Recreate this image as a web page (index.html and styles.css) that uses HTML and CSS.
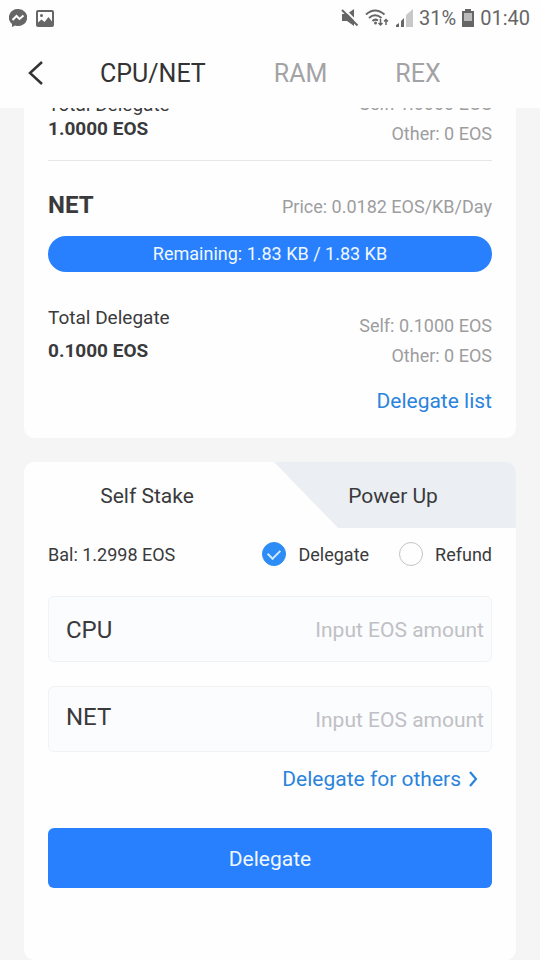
FILE: index.html
```html
<!DOCTYPE html>
<html lang="en">
<head>
<meta charset="utf-8">
<meta name="viewport" content="width=device-width, initial-scale=1">
<title>CPU/NET</title>
<link rel="stylesheet" href="styles.css">
</head>
<body>
<header class="header">
  <div class="status">
    <div class="status-group">
      <svg width="18" height="18" viewBox="0 0 18 18" aria-hidden="true"><path fill="#666" d="M9 0a9 8.500 0 0 0-6 14.900V18l3.200-1.500A9 8.500 0 1 0 9 0z"/><path fill="none" stroke="#fff" stroke-width="2" d="M3.500 11l4-4 3 3 4-3.500"/></svg>
      <svg width="18" height="17" viewBox="0 0 18 17" aria-hidden="true"><rect x="1" y="1" width="16" height="15" rx="1" fill="#fefefe" stroke="#666" stroke-width="2"/><path fill="#666" d="M2 12.500l3.500-3 3 2.500L12.500 7 16 11.500V15H2z"/><circle cx="5.500" cy="5.500" r="1.500" fill="#666"/></svg>
    </div>
    <div class="status-group status-right">
      <svg class="mute" width="18" height="18" viewBox="0 0 18 18" aria-hidden="true"><path fill="#666" d="M1 5h5l7-5v17l-7-5H1z"/><path stroke="#fefefe" stroke-width="2" d="M2 -1l16 16"/><path stroke="#666" stroke-width="2" d="M1 1l15.500 15.500"/></svg>
      <svg class="wifi" width="24" height="18" viewBox="0 0 24 18" aria-hidden="true"><path fill="none" stroke="#666" stroke-width="2" d="M1 5.500Q10-2.500 19.500 5.500M4 9Q10 3.500 16.500 9M7.500 12Q10 9.500 13 11.500"/><circle cx="10.500" cy="14" r="1.500" fill="#666"/><path fill="none" stroke="#666" stroke-width="1.500" d="M15.500 10v6M13.500 14l2 2 2-2M21 16v-5.500M19 12.500l2-2 2 2"/></svg>
      <svg class="signal" width="18" height="18" viewBox="0 0 18 18" aria-hidden="true"><path fill="#c8c8c8" d="M11 6l7-6v18h-7z"/><path fill="#666" d="M1 18v-2l3-2v4zM6 18v-6l3-3v9z"/></svg>
      <span>31%</span>
      <svg class="battery" width="12" height="18" viewBox="0 0 12 18" aria-hidden="true"><path fill="#666" d="M3 0h6v2h3v16H0V2h3z"/><path fill="#bbb" d="M2 4h8v8H2z"/></svg>
      <span>01:40</span>
    </div>
  </div>
  <nav class="nav">
    <button class="back" type="button" aria-label="Back"><svg width="16" height="24" viewBox="0 0 16 24"><path d="M14 1L2 12l12 11" fill="none" stroke="#333" stroke-width="2.500"/></svg></button>
    <a class="nav-link active" href="#cpu">CPU/NET</a>
    <a class="nav-link" href="#ram">RAM</a>
    <a class="nav-link" href="#rex">REX</a>
  </nav>
</header>
<main class="content">
  <section class="card resources">
    <div class="stats stats-cpu">
      <div class="total"><div>Total Delegate</div><strong>1.0000 EOS</strong></div>
      <div class="split"><div>Self: 1.0000 EOS</div><div>Other: 0 EOS</div></div>
    </div>
    <div class="heading">
      <h2>NET</h2>
      <span>Price: 0.0182 EOS/KB/Day</span>
    </div>
    <div class="meter">Remaining: 1.83 KB / 1.83 KB</div>
    <div class="stats">
      <div class="total"><div>Total Delegate</div><strong>0.1000 EOS</strong></div>
      <div class="split"><div>Self: 0.1000 EOS</div><div>Other: 0 EOS</div></div>
    </div>
    <a class="link list-link" href="#list">Delegate list</a>
  </section>
  <section class="card stake">
    <div class="tabs">
      <button type="button" class="tab">Self Stake</button>
      <button type="button" class="tab tab-power">Power Up</button>
    </div>
    <form class="form">
      <div class="options">
        <span class="balance">Bal: 1.2998 EOS</span>
        <label class="option"><input type="radio" name="mode" checked>Delegate</label>
        <label class="option"><input type="radio" name="mode">Refund</label>
      </div>
      <div class="field"><label for="cpu">CPU</label><input id="cpu" type="text" placeholder="Input EOS amount"></div>
      <div class="field field-net"><label for="net">NET</label><input id="net" type="text" placeholder="Input EOS amount"></div>
      <a class="link others" href="#others">Delegate for others <svg width="9" height="16" viewBox="0 0 9 16" aria-hidden="true"><path d="M1 1l6 7-6 7" fill="none" stroke="#2b84dc" stroke-width="2.200"/></svg></a>
      <button class="submit" type="button">Delegate</button>
    </form>
  </section>
</main>
</body>
</html>
```
FILE: styles.css
```css
* { box-sizing: border-box; }

body {
  margin: 0;
  height: 100vh;
  display: flex;
  flex-direction: column;
  background: #f5f5f5;
  color: #3a3a3c;
  font-family: Roboto, "Liberation Sans", sans-serif;
  font-size: 18px;
}

button, input { font: inherit; color: inherit; }
button { border: 0; background: none; padding: 0; }
a { text-decoration: none; }
svg { display: block; flex: none; }

.header {
  position: relative;
  flex: none;
  background: #fefefe;
}

.status {
  display: flex;
  justify-content: space-between;
  align-items: center;
  height: 36px;
  padding: 0 10px 0 9px;
  color: #666;
  font-size: 20px;
}
.status-group { display: flex; align-items: center; gap: 9px; }
.status-right { gap: 6px; }

.nav {
  display: flex;
  align-items: center;
  gap: 68px;
  height: 72px;
  padding: 2px 28px 0;
}
.back { margin-right: -12px; }
.nav-link { color: #a3a3a5; font-size: 25px; }
.nav-link.active { color: #333; }

/* The list is scrolled to its end: earlier rows run up under the header. */
.content {
  flex: 1;
  min-height: 0;
  display: flex;
  flex-direction: column;
  justify-content: flex-end;
  gap: 24px;
  padding: 0 24px;
  overflow: hidden;
}

.card { flex: none; border-radius: 10px; background: #fefefe; }
.resources { padding: 24px 24px 23px; }

.stats {
  display: flex;
  justify-content: space-between;
  align-items: flex-end;
}
.total { padding-bottom: 4px; font-size: 19px; line-height: 33px; }
.total strong { display: block; }
.split { color: #9d9d9f; line-height: 30px; text-align: right; }
.stats-cpu { padding-bottom: 11px; border-bottom: 1px solid #e6e6e6; }
.stats-cpu .total { padding-bottom: 8px; line-height: 24px; }

.heading {
  display: flex;
  justify-content: space-between;
  align-items: baseline;
  margin: 30px 0 15px;
  line-height: 28px;
  color: #9d9d9f;
}
.heading h2 { margin: 0; color: #3a3a3c; font-size: 24px; }

.meter {
  margin-bottom: 29px;
  border-radius: 18px;
  background: #2880fe;
  color: #f0f8ff;
  line-height: 36px;
  text-align: center;
}

.link { color: #2b84dc; font-size: 21px; line-height: 28px; }
.list-link { display: block; width: fit-content; margin: 16px 0 0 auto; }

.tabs { display: flex; }
.tab { flex: 1; height: 66px; padding-top: 2px; font-size: 21px; }
.tab-power {
  border-top-right-radius: 10px;
  background: #ebeff3;
  clip-path: polygon(4px 0, 100% 0, 100% 100%, 68px 100%);
}

.form { padding: 0 24px 72px; }
.options { display: flex; align-items: center; height: 52px; margin-bottom: 16px; }
.balance { flex: 1; }
.option { display: flex; align-items: center; gap: 12px; }
.option + .option { margin-left: 30px; }
.option input {
  appearance: none;
  display: grid;
  place-items: center;
  width: 24px;
  height: 24px;
  margin: 0;
  border: 1px solid #c4c4c6;
  border-radius: 50%;
}
.option input:checked { border-color: #2d8cf5; background: #2d8cf5; }
.option input:checked::after {
  content: "";
  width: 10px;
  height: 6px;
  margin-bottom: 3px;
  border: solid #d4eaff;
  border-width: 0 0 2px 2px;
  transform: rotate(-45deg);
}

.field {
  display: flex;
  align-items: center;
  height: 66px;
  padding: 2px 7px 0 17px;
  border: 1px solid #f0f2f4;
  border-radius: 6px;
  background: #fbfcfe;
}
.field + .field { margin-top: 24px; }
.field label { font-size: 24px; }
.field-net label { padding-bottom: 6px; }
.field input {
  flex: 1;
  min-width: 0;
  border: 0;
  padding: 0;
  background: none;
  font-size: 21px;
  text-align: right;
}
.field input::placeholder { color: #c0c0c4; opacity: 1; }

.others {
  display: flex;
  justify-content: flex-end;
  align-items: center;
  gap: 8px;
  height: 54px;
  margin: 0 14px 22px 0;
}

.submit {
  width: 100%;
  height: 60px;
  padding-top: 2px;
  border-radius: 6px;
  background: #2880fe;
  color: #f0f8ff;
  font-size: 21px;
}
```
